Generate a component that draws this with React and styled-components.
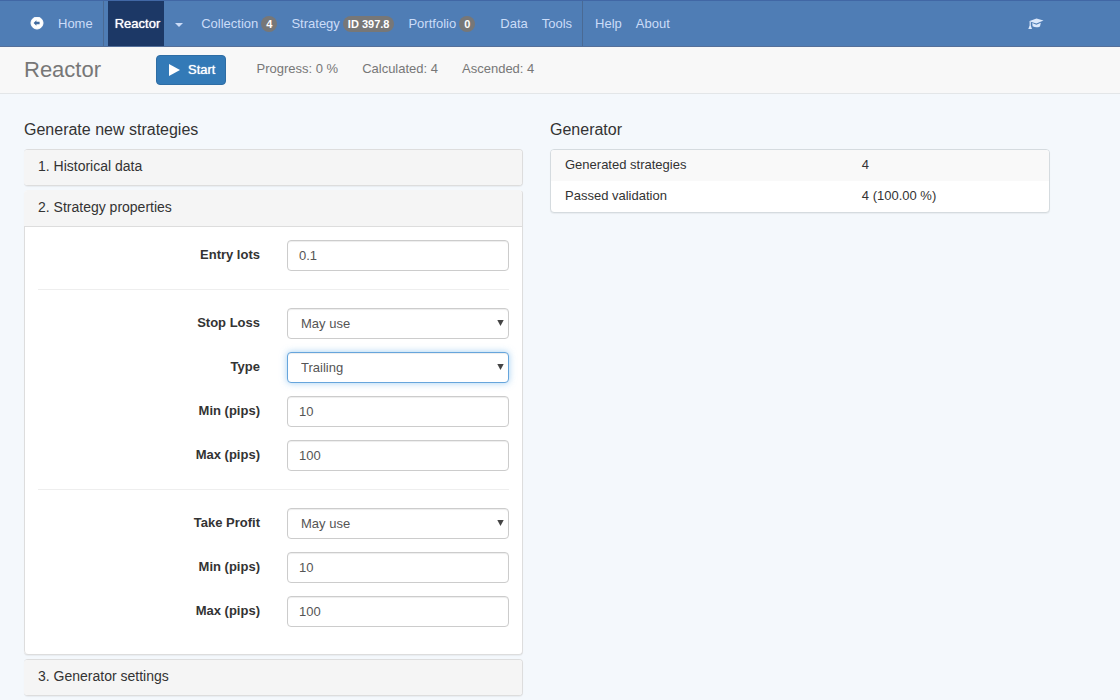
import React from "react";
import styled, { createGlobalStyle } from "styled-components";

const GlobalStyle = createGlobalStyle`
  *, *::before, *::after { box-sizing: border-box; }
  body {
    margin: 0;
    background: #f4f8fc;
    color: #333;
    font: 13px/18px "Liberation Sans", Arial, sans-serif;
  }
  h1, h2, h3, p { margin: 0; font-weight: 400; }
`;

const NavBar = styled.nav`
  display: flex;
  align-items: stretch;
  height: 47px;
  padding: 0 69px 0 23px;
  background: #4f7db5;
  border-top: 1px solid #4167a5;
  border-bottom: 1px solid #55709a;
`;

const NavGroup = styled.div`
  display: flex;
  padding: 0 ${(p) => p.$end || 0}px 0 ${(p) => p.$start || 0}px;
  border-right: ${(p) => (p.$divided ? "1px solid #4a6a94" : "0")};
`;

const NavLink = styled.a`
  display: flex;
  align-items: center;
  gap: 3px;
  padding: 0 ${(p) => (p.$active ? 4 : 7)}px 0 7px;
  color: ${(p) => (p.$active ? "#fff" : "#cbdcf8")};
  background: ${(p) => (p.$active ? "#1c3866" : "transparent")};
  text-shadow: ${(p) => (p.$active ? "0 0 1px #fff" : "none")};
  text-decoration: none;
  white-space: nowrap;
`;

const NavEnd = styled.div`
  display: flex;
  margin-left: auto;
`;

const MenuToggle = styled.button`
  display: flex;
  align-items: center;
  padding: 2px 11px 0;
  border: 0;
  background: none;
`;

const Badge = styled.span`
  padding: 2px 5px;
  border-radius: 8px;
  background: #777;
  color: #fff;
  font-size: 11px;
  line-height: 12px;
  font-weight: 700;
`;

const Toolbar = styled.header`
  display: flex;
  align-items: center;
  height: 47px;
  padding: 0 24px;
  background: #f8f8f8;
  border-bottom: 1px solid #e3e6e8;
  color: #777;
`;

const Title = styled.h1`
  width: 132px;
  font-size: 22px;
  line-height: 24px;
`;

const StartButton = styled.button`
  display: flex;
  align-items: center;
  gap: 8px;
  height: 30px;
  margin-right: 30px;
  padding: 0 10px 0 12px;
  border: 1px solid #2e6da4;
  border-radius: 4px;
  background: #337ab7;
  color: #fff;
  font: inherit;
  text-shadow: 0 0 1px #fff;
`;

const Status = styled.p`
  margin-right: 24px;
  padding-bottom: 2px;
`;

const Columns = styled.main`
  display: grid;
  grid-template-columns: minmax(0, 499fr) minmax(0, 500fr);
  gap: 27px;
  align-items: start;
  padding: 26px 70px 4px 24px;
`;

const SectionTitle = styled.h2`
  margin-bottom: 10px;
  font-size: 16px;
  line-height: 19px;
`;

const Accordion = styled.div`
  display: grid;
  gap: 4px;
`;

const Panel = styled.section`
  border: 1px solid #ddd;
  border-left: 0;
  border-top-color: ${(p) => (p.$open ? "#f5f5f5" : "#ddd")};
  border-radius: 4px;
  overflow: hidden;
  background: #fff;
  box-shadow: 0 1px 1px rgba(0, 0, 0, 0.05);
`;

const PanelHeading = styled.h3`
  background: #f5f5f5;
  border-bottom: ${(p) => (p.$open ? "1px solid #ddd" : "0")};
`;

const PanelToggle = styled.button`
  display: block;
  width: 100%;
  padding: 7px 14px 10px;
  border: 0;
  background: none;
  color: #333;
  font: inherit;
  font-size: 14px;
  line-height: 18px;
  text-align: left;
`;

const PanelForm = styled.form`
  padding: 13px 13px 27px;
  border-left: 1px solid #ddd;
  border-bottom-left-radius: 4px;
`;

const FieldGroup = styled.div`
  display: grid;
  gap: 13px;
`;

const Divider = styled.hr`
  margin: 18px 0;
  border: 0;
  border-top: 1px solid #eee;
`;

const FieldRow = styled.div`
  display: grid;
  grid-template-columns: 249fr 222fr;
`;

const FieldLabel = styled.label`
  padding: 6px 27px 0 0;
  font-weight: 700;
  text-align: right;
`;

const SelectBox = styled.div`
  position: relative;
  svg {
    position: absolute;
    top: 12px;
    right: 5px;
    pointer-events: none;
  }
`;

const Control = styled.input`
  display: block;
  width: 100%;
  height: 31px;
  padding: 0 ${(p) => (p.$select ? 13 : 11)}px;
  border: 1px solid ${(p) => (p.$focused ? "#66a5dc" : "#ccc")};
  border-radius: 4px;
  outline: 0;
  appearance: none;
  background: #fff;
  box-shadow: inset 0 1px 1px rgba(0, 0, 0, 0.075)
    ${(p) => (p.$focused ? ", 0 0 7px rgba(102, 175, 233, 0.6)" : "")};
  color: #555;
  font: inherit;
`;

const ResultTable = styled.table`
  width: 100%;
  border: 1px solid #d5dbdf;
  border-radius: 4px;
  border-spacing: 0;
  background: #fff;
  box-shadow: 0 1px 1px rgba(0, 0, 0, 0.05);
  overflow: hidden;
  tr:first-child { background: #f9f9f9; }
  th, td {
    padding: 6px 14px 7px;
    font-weight: 400;
    text-align: left;
  }
  th { width: 60%; }
  td { padding-left: 12px; }
`;

function Field({ id, label, value, options, focused }) {
  return (
    <FieldRow>
      <FieldLabel htmlFor={id}>{label}</FieldLabel>
      {options ? (
        <SelectBox>
          <Control as="select" id={id} defaultValue={value} $select $focused={focused}>
            {options.map((o) => <option key={o}>{o}</option>)}
          </Control>
          <svg width="7" height="6" viewBox="0 0 7 6" aria-hidden="true">
            <path d="M0.3 0h6.4L3.5 6z" fill="#444" />
          </svg>
        </SelectBox>
      ) : (
        <Control id={id} type="text" defaultValue={value} />
      )}
    </FieldRow>
  );
}

function BackIcon() {
  return (
    <svg width="14" height="14" viewBox="0 0 14 14" aria-hidden="true">
      <circle cx="7" cy="6" r="6" fill="#fff" stroke="#fff" />
      <path d="M3.6 6 6.4 3.2V4.7H9.6V7.3H6.4V8.8z" fill="#416b9f" />
    </svg>
  );
}

function CapIcon() {
  return (
    <svg width="16" height="12" viewBox="0 0 16 12" aria-hidden="true">
      <path d="M1 3.2 8.5 0.5 15.5 2.6 8.4 5.6z" fill="#dce8fa" />
      <path d="M4.2 4.9 8.4 6.7 12.8 4.8 12 8.4Q8.2 10.2 4.6 8.2z" fill="#dce8fa" />
      <path d="M1.6 3.4 2.8 3.8 2.8 7.4 4 11H0.3L1.6 7.4z" fill="#dce8fa" />
    </svg>
  );
}

export default function App() {
  const usage = ["May use", "Always use", "Do not use"];
  return (
    <>
      <GlobalStyle />
      <NavBar>
        <NavGroup $divided $end={3}>
          <NavLink href="#back" aria-label="Back"><BackIcon /></NavLink>
          <NavLink href="#home">Home</NavLink>
        </NavGroup>
        <NavGroup $start={4} $end={11}>
          <NavLink href="#reactor" $active>Reactor</NavLink>
          <MenuToggle type="button" aria-label="Reactor menu">
            <svg width="8" height="4" viewBox="0 0 8 4" aria-hidden="true">
              <path d="M0 0h8L4 4z" fill="#cbdcf8" />
            </svg>
          </MenuToggle>
          <NavLink href="#collection">Collection <Badge>4</Badge></NavLink>
          <NavLink href="#strategy">Strategy <Badge>ID 397.8</Badge></NavLink>
          <NavLink href="#portfolio">Portfolio <Badge>0</Badge></NavLink>
        </NavGroup>
        <NavGroup $divided $end={3}>
          <NavLink href="#data">Data</NavLink>
          <NavLink href="#tools">Tools</NavLink>
        </NavGroup>
        <NavGroup $start={5}>
          <NavLink href="#help">Help</NavLink>
          <NavLink href="#about">About</NavLink>
        </NavGroup>
        <NavEnd>
          <NavLink href="#learn" aria-label="Learn"><CapIcon /></NavLink>
        </NavEnd>
      </NavBar>
      <Toolbar>
        <Title>Reactor</Title>
        <StartButton type="button">
          <svg width="11" height="12" viewBox="0 0 11 12" aria-hidden="true">
            <path d="M0 0v12L11 6z" fill="#fff" />
          </svg>
          Start
        </StartButton>
        <Status>Progress: 0 %</Status>
        <Status>Calculated: 4</Status>
        <Status>Ascended: 4</Status>
      </Toolbar>
      <Columns>
        <div>
          <SectionTitle>Generate new strategies</SectionTitle>
          <Accordion>
            <Panel>
              <PanelHeading><PanelToggle type="button">1. Historical data</PanelToggle></PanelHeading>
            </Panel>
            <Panel $open>
              <PanelHeading $open><PanelToggle type="button">2. Strategy properties</PanelToggle></PanelHeading>
              <PanelForm>
                <Field id="lots" label="Entry lots" value="0.1" />
                <Divider />
                <FieldGroup>
                  <Field id="sl" label="Stop Loss" value="May use" options={usage} />
                  <Field id="sl-type" label="Type" value="Trailing" options={["Fixed", "Trailing"]} focused />
                  <Field id="sl-min" label="Min (pips)" value="10" />
                  <Field id="sl-max" label="Max (pips)" value="100" />
                </FieldGroup>
                <Divider />
                <FieldGroup>
                  <Field id="tp" label="Take Profit" value="May use" options={usage} />
                  <Field id="tp-min" label="Min (pips)" value="10" />
                  <Field id="tp-max" label="Max (pips)" value="100" />
                </FieldGroup>
              </PanelForm>
            </Panel>
            <Panel>
              <PanelHeading><PanelToggle type="button">3. Generator settings</PanelToggle></PanelHeading>
            </Panel>
          </Accordion>
        </div>
        <div>
          <SectionTitle>Generator</SectionTitle>
          <ResultTable>
            <tbody>
              <tr><th scope="row">Generated strategies</th><td>4</td></tr>
              <tr><th scope="row">Passed validation</th><td>4 (100.00 %)</td></tr>
            </tbody>
          </ResultTable>
        </div>
      </Columns>
    </>
  );
}
